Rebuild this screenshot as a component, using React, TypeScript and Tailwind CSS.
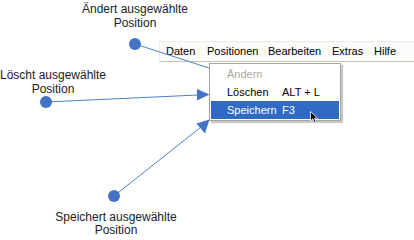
import React from "react";

const menus = [
  { label: "Daten", w: "w-[41px]" },
  { label: "Positionen", w: "w-[61px]" },
  { label: "Bearbeiten", w: "w-[64px]" },
  { label: "Extras", w: "w-[42px]" },
  { label: "Hilfe", w: "w-[30px]" },
];

const items = [
  { label: "Ändern", key: "", disabled: true },
  { label: "Löschen", key: "ALT + L" },
  { label: "Speichern", key: "F3", active: true },
];

export default function App() {
  return (
    <div className="relative w-[414px] h-[238px] bg-white overflow-hidden font-['Liberation_Sans',Arial,sans-serif]">
      {/* Window fragment: menu bar + opened menu */}
      <div className="pt-[41px] pl-[159px]">
        <nav className="h-[21px] flex items-center pl-[6px] bg-[#fbfbf9] border-t border-l border-t-[#ecebe6] border-l-[#ecebe6] border-b border-b-[#c6c3b3] text-[11px] text-black">
          {menus.map((m) => (
            <span key={m.label} className={`${m.w} shrink-0 leading-none`}>
              {m.label}
            </span>
          ))}
        </nav>

        <div className="relative ml-[50px] mt-[1px] w-[132px] p-[1px] bg-white border border-[#a9a697] shadow-[2px_2px_1px_rgba(0,0,0,0.22)] text-[11px]">
          {items.map((it) => (
            <div
              key={it.label}
              className={`h-[18px] flex items-center pl-[16px] ${
                it.active ? "bg-[#316ac5] text-white" : it.disabled ? "text-[#aca899]" : "text-black"
              }`}
            >
              <span className="w-[55px] shrink-0">{it.label}</span>
              <span>{it.key}</span>
            </div>
          ))}

          {/* mouse pointer */}
          <svg className="absolute left-[100px] top-[47px]" width="9" height="13" viewBox="0 0 9 13">
            <path d="M0.5 0.5 L0.5 10 L2.8 7.8 L4.6 11.8 L6.2 11.1 L4.4 7.2 L7.6 7.2 Z" fill="#000" stroke="#fff" strokeWidth="0.8" />
          </svg>
        </div>
      </div>

      {/* Callout lines */}
      <svg className="absolute inset-0 pointer-events-none" width="414" height="238" viewBox="0 0 414 238">
        <line x1="135" y1="44" x2="209" y2="68" stroke="#4f81c7" strokeWidth="1" />
        <line x1="46" y1="102" x2="198" y2="95" stroke="#4f81c7" strokeWidth="1" />
        <polygon points="209.5,94.5 197,89 197,100.5" fill="#4472c4" />
        <line x1="114" y1="196" x2="201" y2="127" stroke="#4f81c7" strokeWidth="1" />
        <polygon points="209.5,119.5 196.5,123.5 205,133.5" fill="#4472c4" />
        <circle cx="135" cy="44" r="6" fill="#4472c4" />
        <circle cx="46" cy="102" r="6" fill="#4472c4" />
        <circle cx="114" cy="196" r="6" fill="#4472c4" />
      </svg>

      {/* Callout labels */}
      <div className="absolute left-[75px] top-[2px] w-[120px] text-center text-[12px] leading-[14px] text-[#222] whitespace-nowrap">
        Ändert ausgewählte
        <br />
        Position
      </div>
      <div className="absolute left-[-7px] top-[68px] w-[120px] text-center text-[12px] leading-[14px] text-[#222] whitespace-nowrap">
        Löscht ausgewählte
        <br />
        Position
      </div>
      <div className="absolute left-[46px] top-[211px] w-[140px] text-center text-[12px] leading-[13px] text-[#222] whitespace-nowrap">
        Speichert ausgewählte
        <br />
        Position
      </div>
    </div>
  );
}
